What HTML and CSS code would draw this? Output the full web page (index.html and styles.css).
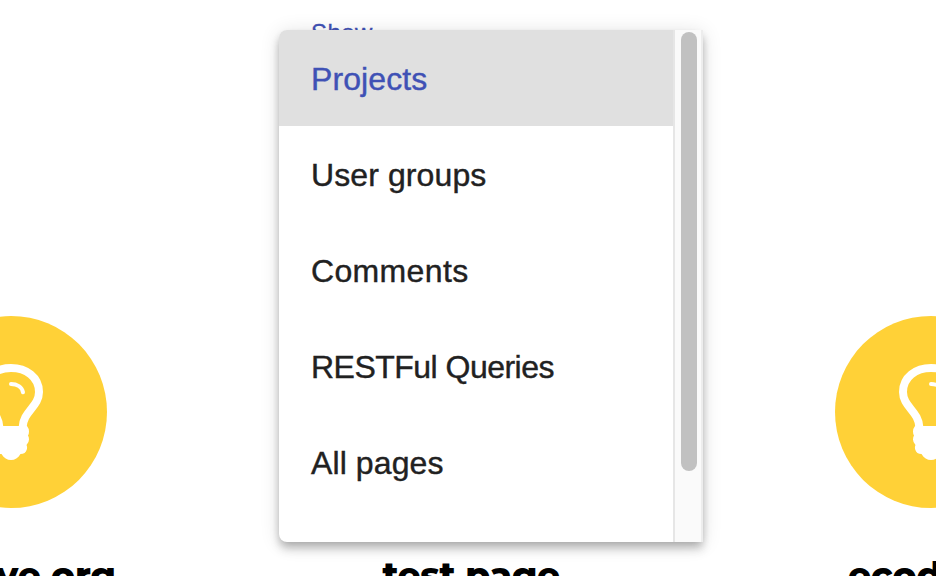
FILE: index.html
```
<!DOCTYPE html>
<html lang="en">
<head>
<meta charset="utf-8">
<title>Show</title>
<link rel="stylesheet" href="styles.css">
</head>
<body>
<svg width="0" height="0" class="defs" aria-hidden="true">
  <symbol id="bulb" viewBox="0 0 64 96">
    <path d="M43.5 64C44 47 60 43 60 28C60 13 47 4 32 4S4 13 4 28C4 43 20 47 20.500 64" fill="none" stroke="#fff" stroke-width="8"/>
    <path d="M32 20C38 20 43 23 44 28.300" fill="none" stroke="#fff" stroke-width="4" stroke-linecap="round"/>
    <path d="M16 62H48Q50 64.500 50 67.500Q50 70 49 71.500Q50 73 50 75.500Q50 78.500 47.500 81Q48.500 83 47.800 85.500Q46.500 90 41.500 90C39 94 36 96 32 96S25 94 22.500 90Q17.500 90 16.200 85.500Q15.500 83 16.500 81Q14 78.500 14 75.500Q14 73 15 71.500Q14 70 14 67.500Q14 64.500 16 62Z" fill="#fff"/>
  </symbol>
</svg>
<main class="page">
  <div class="field-label">Show</div>
  <section class="cards">
    <article class="card">
      <div class="badge"><svg class="bulb"><use href="#bulb"/></svg></div>
      <h2 class="name name-left">ve.org</h2>
    </article>
    <article class="card">
      <div class="badge"><svg class="bulb"><use href="#bulb"/></svg></div>
      <h2 class="name name-center">test page</h2>
    </article>
    <article class="card">
      <div class="badge"><svg class="bulb"><use href="#bulb"/></svg></div>
      <h2 class="name name-right">ecod</h2>
    </article>
  </section>
  <div class="menu">
    <ul class="options">
      <li class="option selected">Projects</li>
      <li class="option">User groups</li>
      <li class="option comments">Comments</li>
      <li class="option queries">RESTFul Queries</li>
      <li class="option">All pages</li>
    </ul>
    <div class="track"><div class="thumb"></div></div>
  </div>
</main>
</body>
</html>
```
FILE: styles.css
```
* { box-sizing: border-box; }
body {
  margin: 0;
  background: #fff;
  font-family: "Liberation Sans", Arial, sans-serif;
  overflow: hidden;
}
.defs { position: absolute; }
.page {
  position: relative;
  width: 936px;
  height: 576px;
  overflow: hidden;
}
.field-label {
  height: 316px;
  padding: 19px 0 0 311px;
  font-size: 24px;
  line-height: 27px;
  letter-spacing: 0.4px;
  color: #3f51b5;
  -webkit-text-stroke: 0.3px;
}
.cards {
  display: grid;
  grid-template-columns: repeat(3, 460px);
  margin-left: -219px;
}
.card {
  display: flex;
  flex-direction: column;
  align-items: center;
}
.badge {
  display: flex;
  align-items: center;
  justify-content: center;
  width: 192px;
  height: 192px;
  border-radius: 50%;
  background: #ffd137;
}
.bulb { width: 64px; height: 96px; }
.name {
  margin: 45px 0 0;
  font-family: Montserrat, Inter, sans-serif;
  font-size: 36px;
  font-weight: 800;
  line-height: 44px;
  white-space: nowrap;
  color: #000;
}
.name-left { align-self: flex-end; margin-right: 125px; }
.name-center { letter-spacing: -0.4px; }
.name-right { align-self: flex-start; margin-left: 147px; }
.menu {
  position: absolute;
  left: 279px;
  top: 30px;
  display: flex;
  width: 424px;
  height: 512px;
  border-radius: 8px 0 0 8px;
  background: #fff;
  overflow: hidden;
  box-shadow: 0 4px 8px -2px rgba(0, 0, 0, 0.2),
    0 8px 10px 0 rgba(0, 0, 0, 0.14),
    0 2px 20px 0 rgba(0, 0, 0, 0.12);
}
.options {
  flex: 1;
  margin: 0;
  padding: 0;
  list-style: none;
}
.option {
  height: 96px;
  padding: 0 32px;
  font-size: 32px;
  line-height: 98px;
  letter-spacing: 0.1px;
  color: #212121;
  white-space: nowrap;
  -webkit-text-stroke: 0.4px;
}
.comments { letter-spacing: 0.35px; }
.queries { letter-spacing: -0.52px; }
.selected { background: #e0e0e0; color: #3f51b5; }
.track {
  width: 30px;
  padding: 2px 4px 0 6px;
  border-left: 2px solid #e6e6e6;
  border-right: 2px solid #ededed;
  background: #fafafa;
}
.thumb {
  width: 16px;
  height: 439px;
  border-radius: 8px;
  background: #c1c1c1;
}
```
